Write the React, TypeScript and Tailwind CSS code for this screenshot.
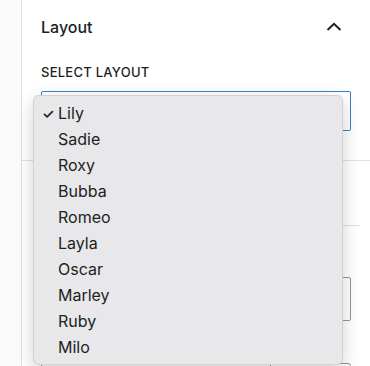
import React from 'react';

const options = ['Lily', 'Sadie', 'Roxy', 'Bubba', 'Romeo', 'Layla', 'Oscar', 'Marley', 'Ruby', 'Milo'];

const ChevronUp = () => (
    <svg width="24" height="24" viewBox="0 0 24 24" className="text-[#1e1e1e]">
        <path d="M5.5 15 12 8.8l6.5 6.2" fill="none" stroke="currentColor" strokeWidth="2" />
    </svg>
);

export default function App() {
    return (
        <div
            className="flex h-[366px] w-[370px] overflow-hidden bg-[#fbfbfc] text-[#1e1e1e]"
            style={{ fontFamily: 'Inter, "Noto Sans", sans-serif' }}
        >
            <div className="w-[21px] shrink-0" />
            <div className="relative flex-1 border-l border-[#e0e0e0] bg-white">
                <section className="border-b border-[#e0e0e0] pl-[19px] pr-[19px]">
                    <div className="flex h-[54px] items-center justify-between">
                        <h2 className="text-[16px] font-medium">Layout</h2>
                        <span className="mr-[5px]"><ChevronUp /></span>
                    </div>
                    <p className="mt-[8px] text-[13px] font-medium uppercase tracking-[0.02em] leading-[20px]">Select layout</p>
                    <div className="mt-[9px] mb-[29px] h-[40px] rounded-[2px] border-[1.5px] border-[#3582c4]" />
                </section>
                <div className="mr-[10px] ml-[19px] mt-[64px] border-t border-[#e0e0e0]" />
                <div className="ml-[19px] mr-[19px] mt-[51px] h-[44px] rounded-[2px] border border-[#949494]" />
                <div className="ml-[19px] mr-[19px] mt-[42px] flex h-[20px] rounded-t-[3px] border border-[#949494]">
                    <div className="w-[229px] border-r border-[#949494]" />
                </div>

                <ul className="absolute left-[11px] top-[95px] w-[310px] rounded-[6px] border border-[#d2d2d4] bg-[#e8e8ea] py-[4px] shadow-[0_6px_18px_rgba(0,0,0,0.18)]">
                    {options.map((name, i) => (
                        <li key={name} className="relative flex h-[26px] items-center pl-[24px] text-[16px] text-[#222]">
                            {i === 0 && <span className="absolute left-[8px] text-[14px] font-semibold">✓</span>}
                            {name}
                        </li>
                    ))}
                </ul>
            </div>
        </div>
    );
}
